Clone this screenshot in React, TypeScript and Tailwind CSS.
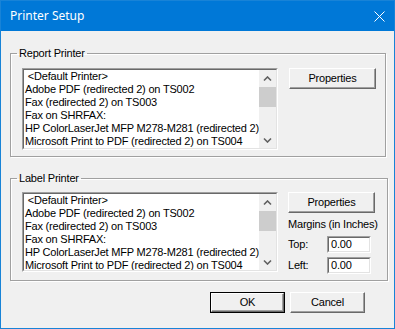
import React from 'react';

const printers = [
  '\u00a0<Default Printer>',
  'Adobe PDF (redirected 2) on TS002',
  'Fax (redirected 2) on TS003',
  'Fax on SHRFAX:',
  'HP ColorLaserJet MFP M278-M281 (redirected 2)',
  'Microsoft Print to PDF (redirected 2) on TS004',
];

const Chevron: React.FC<{ down?: boolean }> = ({ down }) => (
  <svg width="9" height="6" viewBox="0 0 9 6">
    <path
      d={down ? 'M1 1.5 L4.5 5 L8 1.5' : 'M1 4.5 L4.5 1 L8 4.5'}
      fill="none"
      stroke="#606060"
      strokeWidth="1.6"
    />
  </svg>
);

const Scrollbar = () => (
  <div className="flex w-[17px] flex-col bg-[#f0f0f0]">
    <div className="flex h-[17px] items-center justify-center">
      <Chevron />
    </div>
    <div className="h-[20px] bg-[#cdcdcd]" />
    <div className="flex-1" />
    <div className="flex h-[17px] items-center justify-center">
      <Chevron down />
    </div>
  </div>
);

const PrinterList: React.FC<{ height: string }> = ({ height }) => (
  <div className={`flex w-[256px] shrink-0 border border-t-[#a0a0a0] border-l-[#a0a0a0] border-b-white border-r-white ${height}`}>
    <div className="flex min-w-0 flex-1 border border-t-[#696969] border-l-[#696969] border-b-[#e3e3e3] border-r-[#e3e3e3] bg-white">
      <div className="min-w-0 flex-1 overflow-hidden pl-px">
        {printers.map((p) => (
          <div key={p} className="h-[13px] whitespace-nowrap leading-[13px]">
            {p}
          </div>
        ))}
      </div>
      <Scrollbar />
    </div>
  </div>
);

const Button: React.FC<{ label: string; width: string; isDefault?: boolean }> = ({ label, width, isDefault }) => {
  const inner = (
    <div className="flex h-full w-full items-center justify-center border border-t-white border-l-white border-b-[#696969] border-r-[#696969] bg-[#f0f0f0] shadow-[inset_-1px_-1px_0_#a0a0a0]">
      {label}
    </div>
  );
  return isDefault ? (
    <div className={`h-[21px] border border-black ${width}`}>{inner}</div>
  ) : (
    <div className={`h-[21px] ${width}`}>{inner}</div>
  );
};

const TextBox: React.FC<{ value: string }> = ({ value }) => (
  <div className="h-[17px] w-[44px] border border-t-[#a0a0a0] border-l-[#a0a0a0] border-b-white border-r-white">
    <div className="h-full border border-t-[#696969] border-l-[#696969] border-b-[#e3e3e3] border-r-[#e3e3e3] bg-white pl-[2px] leading-[13px]">
      {value}
    </div>
  </div>
);

export default function App() {
  return (
    <div
      className="flex h-[329px] w-[395px] flex-col border border-[#1883d7] bg-[#f0f0f0] text-[11px] tracking-[-0.2px] text-black"
      style={{ fontFamily: '"Liberation Sans", Arial, sans-serif' }}
    >
      {/* title bar */}
      <div className="flex h-[30px] shrink-0 items-center justify-between bg-[#0078d7] pl-[9px] pr-[9px] text-white">
        <span className="text-[12px] tracking-normal" style={{ fontFamily: '"Noto Sans", sans-serif' }}>
          Printer Setup
        </span>
        <svg width="11" height="11" viewBox="0 0 11 11">
          <path d="M0.5 0.5 L10.5 10.5 M10.5 0.5 L0.5 10.5" stroke="#fff" strokeWidth="1" />
        </svg>
      </div>

      <div className="flex flex-1 flex-col pl-[9px] pr-[8px]">
        {/* report printer */}
        <fieldset className="mt-[16px] w-[376px] border border-[#a0a0a0] pb-[6px] pl-[6px] pr-[9px] pt-[8px] shadow-[inset_1px_1px_0_#fff,1px_1px_0_#fff]">
          <legend className="px-[2px] leading-[13px]">Report Printer</legend>
          <div className="flex items-start gap-[11px] pl-[5px]">
            <PrinterList height="h-[82px]" />
            <Button label="Properties" width="w-[87px]" />
          </div>
        </fieldset>

        {/* label printer */}
        <fieldset className="mt-[15px] w-[376px] border border-[#a0a0a0] pb-[6px] pl-[6px] pr-[9px] pt-[7px] shadow-[inset_1px_1px_0_#fff,1px_1px_0_#fff]">
          <legend className="px-[2px] leading-[13px]">Label Printer</legend>
          <div className="flex items-start gap-[10px] pl-[5px]">
            <PrinterList height="h-[80px]" />
            <div className="flex flex-col">
              <Button label="Properties" width="w-[87px]" />
              <div className="mt-[5px] h-[13px] whitespace-nowrap leading-[13px]">Margins (in Inches)</div>
              <div className="mt-[5px] flex items-center">
                <span className="w-[39px]">Top:</span>
                <TextBox value="0.00" />
              </div>
              <div className="mt-[4px] flex items-center">
                <span className="w-[39px]">Left:</span>
                <TextBox value="0.00" />
              </div>
            </div>
          </div>
        </fieldset>

        {/* dialog buttons */}
        <div className="mt-[11px] flex justify-end gap-[5px] pr-[21px]">
          <Button label="OK" width="w-[75px]" isDefault />
          <Button label="Cancel" width="w-[75px]" />
        </div>
      </div>
    </div>
  );
}
